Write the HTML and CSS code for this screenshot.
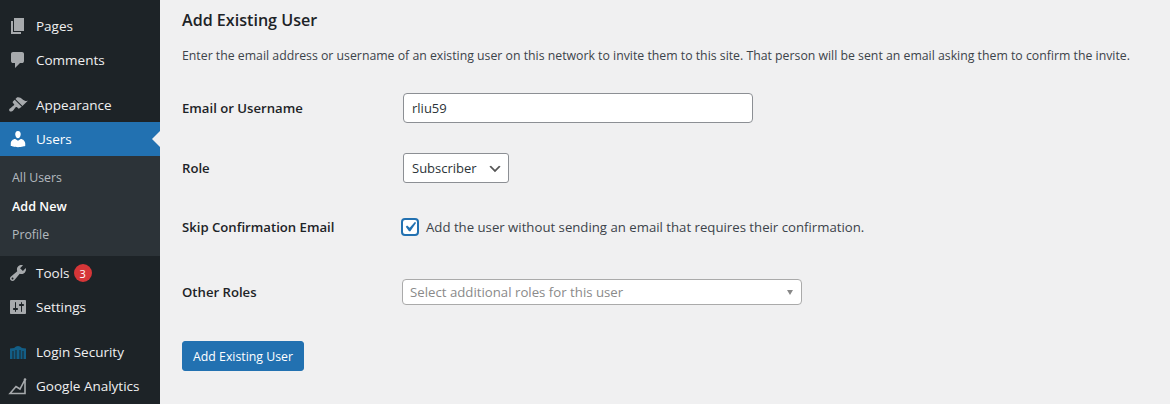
FILE: index.html
```html
<!DOCTYPE html>
<html lang="en">
<head>
<meta charset="utf-8">
<title>Add Existing User</title>
<link rel="stylesheet" href="styles.css">
</head>
<body>
<div class="app">
  <nav class="sidebar">
    <ul class="menu">
      <li class="item"><svg class="icon" viewBox="0 0 20 20"><path d="M6 15V2h10v13H6zm-1 1h8v2H3V5h2v11z"/></svg>Pages</li>
      <li class="item"><svg class="icon" viewBox="0 0 20 20"><path d="M5 2h9q.82 0 1.41.59T16 4v7q0 .82-.59 1.41T14 13h-2l-5 5v-5H5q-.82 0-1.41-.59T3 11V4q0-.82.59-1.41T5 2z"/></svg>Comments</li>
      <li class="sep"></li>
      <li class="item"><svg class="icon" viewBox="0 0 20 20"><path d="M14.48 11.06L7.41 3.99l1.5-1.5c.5-.56 2.3-.47 3.51.32 1.21.8 1.43 1.28 2.91 2.1 1.18.64 2.45 1.26 4.45.85zm-.71.71L6.7 4.7 4.93 6.47c-.39.39-.39 1.02 0 1.41l1.06 1.06c.39.39.39 1.03 0 1.42-.6.6-1.43 1.11-2.21 1.69-.35.26-.7.53-1.01.84C1.43 13.23.4 14.91 1.7 16.21c.9.9 2.65.1 3.44-.7.31-.31.58-.66.84-1.01.58-.78 1.09-1.61 1.69-2.21.39-.39 1.02-.39 1.41 0l1.06 1.06c.39.39 1.02.39 1.41 0z"/></svg>Appearance</li>
      <li class="item current"><svg class="icon" viewBox="0 0 20 20"><path d="M10 9.25c-2.27 0-2.73-3.44-2.73-3.44C7 4.02 7.82 2 9.97 2c2.16 0 2.98 2.02 2.71 3.81 0 0-.41 3.44-2.68 3.44zm0 2.57L12.72 10c2.39 0 4.52 2.33 4.52 4.53v2.49s-3.65 1.13-7.24 1.13c-3.65 0-7.24-1.13-7.24-1.13v-2.49c0-2.25 1.94-4.48 4.47-4.48z"/></svg>Users</li>
      <li class="submenu">
        <a class="subitem">All Users</a>
        <a class="subitem active">Add New</a>
        <a class="subitem">Profile</a>
      </li>
      <li class="item"><svg class="icon" viewBox="0 0 20 20"><path d="M16.68 9.77c-1.34 1.34-3.3 1.67-4.95.99l-5.41 6.52c-.99.99-2.59.99-3.58 0s-.99-2.59 0-3.57l6.52-5.42c-.68-1.65-.35-3.61.99-4.95 1.28-1.28 3.12-1.62 4.72-1.06l-2.89 2.89 2.82 2.82 2.86-2.87c.53 1.58.18 3.39-1.08 4.65zM3.81 16.21c.4.39 1.04.39 1.43 0 .4-.4.4-1.04 0-1.43-.39-.4-1.03-.4-1.43 0-.39.39-.39 1.03 0 1.43z"/></svg>Tools<span class="badge">3</span></li>
      <li class="item"><svg class="icon" viewBox="0 0 20 20"><path fill-rule="evenodd" d="M18 16V4c0-.55-.45-1-1-1H3c-.55 0-1 .45-1 1v12c0 .55.45 1 1 1h14c.55 0 1-.45 1-1zM8 11h1c.55 0 1 .45 1 1s-.45 1-1 1H8v1.5c0 .28-.22.5-.5.5s-.5-.22-.5-.5V13H6c-.55 0-1-.45-1-1s.45-1 1-1h1V5.5c0-.28.22-.5.5-.5s.5.22.5.5V11zm5-2h-1c-.55 0-1-.45-1-1s.45-1 1-1h1V5.5c0-.28.22-.5.5-.5s.5.22.5.5V7h1c.55 0 1 .45 1 1s-.45 1-1 1h-1v5.5c0 .28-.22.5-.5.5s-.5-.22-.5-.5V9z"/></svg>Settings</li>
      <li class="sep"></li>
      <li class="item"><svg class="icon castle" viewBox="0 0 20 20"><path fill-rule="evenodd" d="M2 6.500l4-.5q4-4 8 0l4 .5V17H2zM4.500 9v8h1V9zM7.500 8v9h1V8zM11.500 8v9h1V8zM14.500 9v8h1V9z"/></svg>Login Security</li>
      <li class="item"><svg class="icon chart" viewBox="0 0 20 20"><path d="M2 17.500L8 10.500l4 2.500 5-9.500v14z"/><circle cx="17" cy="3.500" r="1.300"/></svg>Google Analytics</li>
    </ul>
  </nav>
  <main class="content">
    <h2 class="title">Add Existing User</h2>
    <p class="desc">Enter the email address or username of an existing user on this network to invite them to this site. That person will be sent an email asking them to confirm the invite.</p>
    <form class="form">
      <div class="row row-email">
        <label class="label">Email or Username</label>
        <input class="text" type="text" value="rliu59">
      </div>
      <div class="row row-role">
        <label class="label">Role</label>
        <select class="select"><option>Subscriber</option></select>
      </div>
      <div class="row row-skip">
        <label class="label">Skip Confirmation Email</label>
        <label class="check"><input class="box" type="checkbox" checked>Add the user without sending an email that requires their confirmation.</label>
      </div>
      <div class="row row-other">
        <label class="label">Other Roles</label>
        <div class="multi">Select additional roles for this user<span class="caret"></span></div>
      </div>
      <button class="btn" type="button">Add Existing User</button>
    </form>
  </main>
</div>
</body>
</html>
```
FILE: styles.css
```css
* { box-sizing: border-box; }
html, body { margin: 0; height: 100%; overflow: hidden; }
body {
  background: #f0f0f1;
  color: #3c434a;
  font-family: "Open Sans", "Noto Sans", sans-serif;
  font-size: 13px;
}
.app { display: flex; height: 404px; }
.sidebar { width: 160px; flex: none; background: #1d2327; }
.menu { list-style: none; margin: 0; padding: 9px 0 0; }
.item {
  position: relative;
  display: flex;
  align-items: center;
  height: 34px;
  padding-left: 8px;
  color: #f0f0f1;
  font-size: 13.5px;
}
.icon { width: 20px; height: 20px; margin-right: 8px; fill: #a7aaad; flex: none; }
.icon.castle { fill: #135e86; }
.icon.chart { fill: none; stroke: #a7aaad; stroke-width: 1.6; }
.icon.chart circle { fill: #a7aaad; stroke: none; }
.sep { height: 11px; }
.current { background: #2271b1; color: #fff; }
.current .icon { fill: #fff; }
.current::after {
  content: "";
  position: absolute;
  right: 0;
  top: 50%;
  margin-top: -8px;
  border: 8px solid transparent;
  border-right-color: #f0f0f1;
}
.submenu {
  display: flex;
  flex-direction: column;
  height: 100px;
  padding: 7px 0;
  background: #2c3338;
}
.subitem {
  display: flex;
  align-items: center;
  height: 28px;
  padding-left: 12px;
  color: rgba(240, 246, 252, .7);
  font-size: 12.3px;
}
.subitem.active { margin-top: 1px; color: #fff; font-weight: 600; font-size: 12.6px; }
.badge {
  display: flex;
  align-items: center;
  justify-content: center;
  width: 18px;
  height: 18px;
  margin-left: 4px;
  border-radius: 50%;
  background: #d63638;
  color: #fff;
  font-size: 11px;
}
.content { flex: 1; padding: 0 0 0 22px; }
.title {
  margin: 9px 0 0;
  height: 23px;
  line-height: 23px;
  font-size: 16.1px;
  font-weight: 600;
  color: #1d2327;
}
.desc { margin: 15px 0 0; line-height: 18px; font-size: 12.29px; white-space: nowrap; }
.form { display: flex; flex-direction: column; margin-top: 28px; }
.row { display: flex; align-items: center; }
.label { width: 221px; flex: none; font-weight: 600; color: #1d2327; font-size: 13.15px; }
.text {
  width: 350px;
  height: 30px;
  padding: 0 8px;
  border: 1px solid #8c8f94;
  border-radius: 4px;
  background: #fff;
  color: #2c3338;
  font: inherit;
}
.row-role { margin-top: 30px; }
.select {
  appearance: none;
  width: 106px;
  height: 30px;
  padding: 0 24px 0 8px;
  border: 1px solid #8c8f94;
  border-radius: 3px;
  color: #2c3338;
  font: inherit;
  background: #fff url("data:image/svg+xml,%3Csvg xmlns='http://www.w3.org/2000/svg' width='20' height='20'%3E%3Cpath d='M5 6l5 5 5-5 2 1-7 7-7-7z' fill='%23555'/%3E%3C/svg%3E") no-repeat right 5px top 55%/16px 16px;
}
.row-skip { margin-top: 35px; height: 18px; }
.check { display: flex; align-items: center; font-size: 13.2px; margin-left: -2px; }
.box {
  appearance: none;
  width: 18px;
  height: 18px;
  margin: 0 7px 0 0;
  border: 2px solid #2271b1;
  border-radius: 4px;
  background: #fff url("data:image/svg+xml,%3Csvg xmlns='http://www.w3.org/2000/svg' viewBox='0 0 20 20'%3E%3Cpath d='M14.83 4.89l1.34.94-5.81 8.38H9.020L5.780 9.670l1.340-1.250 2.570 2.400z' fill='%232271b1'/%3E%3C/svg%3E") no-repeat center/20px 20px;
}
.row-other { margin-top: 43px; }
.multi {
  position: relative;
  width: 400px;
  height: 26px;
  margin-left: -1px;
  padding-left: 7px;
  line-height: 24px;
  border: 1px solid #aaa;
  border-radius: 4px;
  background: #fff;
  color: #8a8a8a;
  font-size: 13.22px;
}
.caret {
  position: absolute;
  right: 8px;
  top: 10px;
  border: 3px solid transparent;
  border-top: 5px solid #888;
  border-bottom: 0;
}
.btn {
  align-self: flex-start;
  width: 122px;
  height: 30px;
  margin-top: 36px;
  padding: 0;
  border: 1px solid #2271b1;
  border-radius: 3px;
  background: #2271b1;
  color: #fff;
  font: inherit;
  font-size: 12.3px;
}
```
